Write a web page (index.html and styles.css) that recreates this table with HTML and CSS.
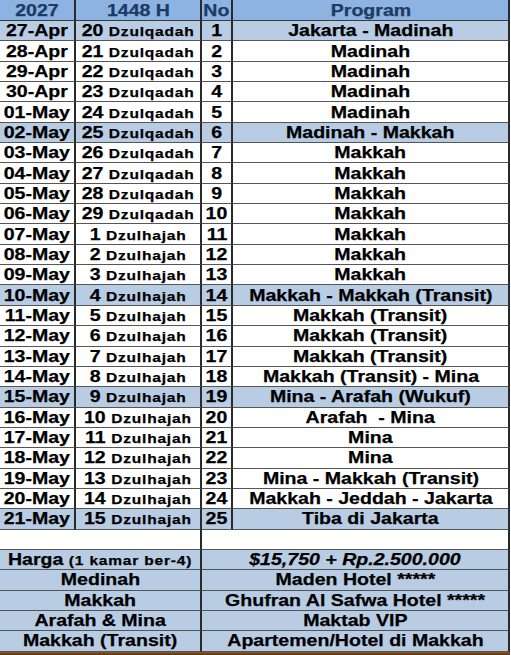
FILE: index.html
```html
<!DOCTYPE html>
<html>
<head>
<meta charset="utf-8">
<link rel="stylesheet" href="styles.css">
</head>
<body>
<div class="sheet">
  <div class="grid">
    <div class="row hd"><div class="c"><span class="t">2027</span></div><div class="c"><span class="t">1448 H</span></div><div class="c"><span class="t">No</span></div><div class="c"><span class="t">Program</span></div></div>
    <div class="row hl"><div class="c"><span class="t">27-Apr</span></div><div class="c"><span class="t">20 <small>Dzulqadah</small></span></div><div class="c"><span class="t">1</span></div><div class="c"><span class="t">Jakarta - Madinah</span></div></div>
    <div class="row"><div class="c"><span class="t">28-Apr</span></div><div class="c"><span class="t">21 <small>Dzulqadah</small></span></div><div class="c"><span class="t">2</span></div><div class="c"><span class="t">Madinah</span></div></div>
    <div class="row"><div class="c"><span class="t">29-Apr</span></div><div class="c"><span class="t">22 <small>Dzulqadah</small></span></div><div class="c"><span class="t">3</span></div><div class="c"><span class="t">Madinah</span></div></div>
    <div class="row"><div class="c"><span class="t">30-Apr</span></div><div class="c"><span class="t">23 <small>Dzulqadah</small></span></div><div class="c"><span class="t">4</span></div><div class="c"><span class="t">Madinah</span></div></div>
    <div class="row"><div class="c"><span class="t">01-May</span></div><div class="c"><span class="t">24 <small>Dzulqadah</small></span></div><div class="c"><span class="t">5</span></div><div class="c"><span class="t">Madinah</span></div></div>
    <div class="row hl"><div class="c"><span class="t">02-May</span></div><div class="c"><span class="t">25 <small>Dzulqadah</small></span></div><div class="c"><span class="t">6</span></div><div class="c"><span class="t">Madinah - Makkah</span></div></div>
    <div class="row"><div class="c"><span class="t">03-May</span></div><div class="c"><span class="t">26 <small>Dzulqadah</small></span></div><div class="c"><span class="t">7</span></div><div class="c"><span class="t">Makkah</span></div></div>
    <div class="row"><div class="c"><span class="t">04-May</span></div><div class="c"><span class="t">27 <small>Dzulqadah</small></span></div><div class="c"><span class="t">8</span></div><div class="c"><span class="t">Makkah</span></div></div>
    <div class="row"><div class="c"><span class="t">05-May</span></div><div class="c"><span class="t">28 <small>Dzulqadah</small></span></div><div class="c"><span class="t">9</span></div><div class="c"><span class="t">Makkah</span></div></div>
    <div class="row"><div class="c"><span class="t">06-May</span></div><div class="c"><span class="t">29 <small>Dzulqadah</small></span></div><div class="c"><span class="t">10</span></div><div class="c"><span class="t">Makkah</span></div></div>
    <div class="row"><div class="c"><span class="t">07-May</span></div><div class="c"><span class="t">1 <small>Dzulhajah</small></span></div><div class="c"><span class="t">11</span></div><div class="c"><span class="t">Makkah</span></div></div>
    <div class="row"><div class="c"><span class="t">08-May</span></div><div class="c"><span class="t">2 <small>Dzulhajah</small></span></div><div class="c"><span class="t">12</span></div><div class="c"><span class="t">Makkah</span></div></div>
    <div class="row"><div class="c"><span class="t">09-May</span></div><div class="c"><span class="t">3 <small>Dzulhajah</small></span></div><div class="c"><span class="t">13</span></div><div class="c"><span class="t">Makkah</span></div></div>
    <div class="row hl"><div class="c"><span class="t">10-May</span></div><div class="c"><span class="t">4 <small>Dzulhajah</small></span></div><div class="c"><span class="t">14</span></div><div class="c"><span class="t">Makkah - Makkah (Transit)</span></div></div>
    <div class="row"><div class="c"><span class="t">11-May</span></div><div class="c"><span class="t">5 <small>Dzulhajah</small></span></div><div class="c"><span class="t">15</span></div><div class="c"><span class="t">Makkah (Transit)</span></div></div>
    <div class="row"><div class="c"><span class="t">12-May</span></div><div class="c"><span class="t">6 <small>Dzulhajah</small></span></div><div class="c"><span class="t">16</span></div><div class="c"><span class="t">Makkah (Transit)</span></div></div>
    <div class="row"><div class="c"><span class="t">13-May</span></div><div class="c"><span class="t">7 <small>Dzulhajah</small></span></div><div class="c"><span class="t">17</span></div><div class="c"><span class="t">Makkah (Transit)</span></div></div>
    <div class="row"><div class="c"><span class="t">14-May</span></div><div class="c"><span class="t">8 <small>Dzulhajah</small></span></div><div class="c"><span class="t">18</span></div><div class="c"><span class="t">Makkah (Transit) - Mina</span></div></div>
    <div class="row hl"><div class="c"><span class="t">15-May</span></div><div class="c"><span class="t">9 <small>Dzulhajah</small></span></div><div class="c"><span class="t">19</span></div><div class="c"><span class="t">Mina - Arafah (Wukuf)</span></div></div>
    <div class="row"><div class="c"><span class="t">16-May</span></div><div class="c"><span class="t">10 <small>Dzulhajah</small></span></div><div class="c"><span class="t">20</span></div><div class="c"><span class="t">Arafah &nbsp;- Mina</span></div></div>
    <div class="row"><div class="c"><span class="t">17-May</span></div><div class="c"><span class="t">11 <small>Dzulhajah</small></span></div><div class="c"><span class="t">21</span></div><div class="c"><span class="t">Mina</span></div></div>
    <div class="row"><div class="c"><span class="t">18-May</span></div><div class="c"><span class="t">12 <small>Dzulhajah</small></span></div><div class="c"><span class="t">22</span></div><div class="c"><span class="t">Mina</span></div></div>
    <div class="row"><div class="c"><span class="t">19-May</span></div><div class="c"><span class="t">13 <small>Dzulhajah</small></span></div><div class="c"><span class="t">23</span></div><div class="c"><span class="t">Mina - Makkah (Transit)</span></div></div>
    <div class="row"><div class="c"><span class="t">20-May</span></div><div class="c"><span class="t">14 <small>Dzulhajah</small></span></div><div class="c"><span class="t">24</span></div><div class="c"><span class="t">Makkah - Jeddah - Jakarta</span></div></div>
    <div class="row hl"><div class="c"><span class="t">21-May</span></div><div class="c"><span class="t">15 <small>Dzulhajah</small></span></div><div class="c"><span class="t">25</span></div><div class="c"><span class="t">Tiba di Jakarta</span></div></div>
    <div class="row"><div class="c span2"></div><div class="c span2"></div></div>
    <div class="row hl"><div class="c span2"><span class="t">Harga <small>(1 kamar ber-4)</small></span></div><div class="c span2"><span class="t"><em>$15,750 + Rp.2.500.000</em></span></div></div>
    <div class="row hl"><div class="c span2"><span class="t">Medinah</span></div><div class="c span2"><span class="t">Maden Hotel *****</span></div></div>
    <div class="row hl"><div class="c span2"><span class="t">Makkah</span></div><div class="c span2"><span class="t">Ghufran Al Safwa Hotel *****</span></div></div>
    <div class="row hl"><div class="c span2"><span class="t">Arafah &amp; Mina</span></div><div class="c span2"><span class="t">Maktab VIP</span></div></div>
    <div class="row hl"><div class="c span2"><span class="t">Makkah (Transit)</span></div><div class="c span2"><span class="t">Apartemen/Hotel di Makkah</span></div></div>
  </div>
  <div class="strip"></div>
</div>
</body>
</html>
```
FILE: styles.css
```css
html, body {
  margin: 0;
  padding: 0;
  background: #ffffff;
}
body {
  font-family: "Liberation Sans", Arial, sans-serif;
  font-weight: bold;
  color: #000;
}
.sheet {
  width: 510px;
}
.grid {
  display: grid;
  grid-template-columns: 76px 126px 31px 277px;
  grid-template-rows: 21px;
  grid-auto-rows: 20.35px;
}
.row {
  display: contents;
}
.c {
  box-sizing: border-box;
  display: flex;
  align-items: center;
  justify-content: center;
  border-right: 2px solid #2a2a2a;
  border-bottom: 1px solid #555555;
  background: #ffffff;
  font-size: 17px;
  white-space: nowrap;
  overflow: visible;
}
.span2 {
  grid-column: span 2;
}
.hd .c {
  background: #8db3e2;
  color: #1c3b63;
  border-bottom: 1px solid #3a3a3a;
}
.hl .c {
  background: #b8cce4;
}
.t {
  display: inline-block;
  transform: scaleX(1.15);
  line-height: 1;
  -webkit-text-stroke: 0.25px currentColor;
}
.t small {
  font-size: 13.5px;
  letter-spacing: 0.7px;
}
.t em {
  font-style: italic;
}
.strip {
  height: 3px;
  background: linear-gradient(#8a5a26, #5a3210);
}
```
